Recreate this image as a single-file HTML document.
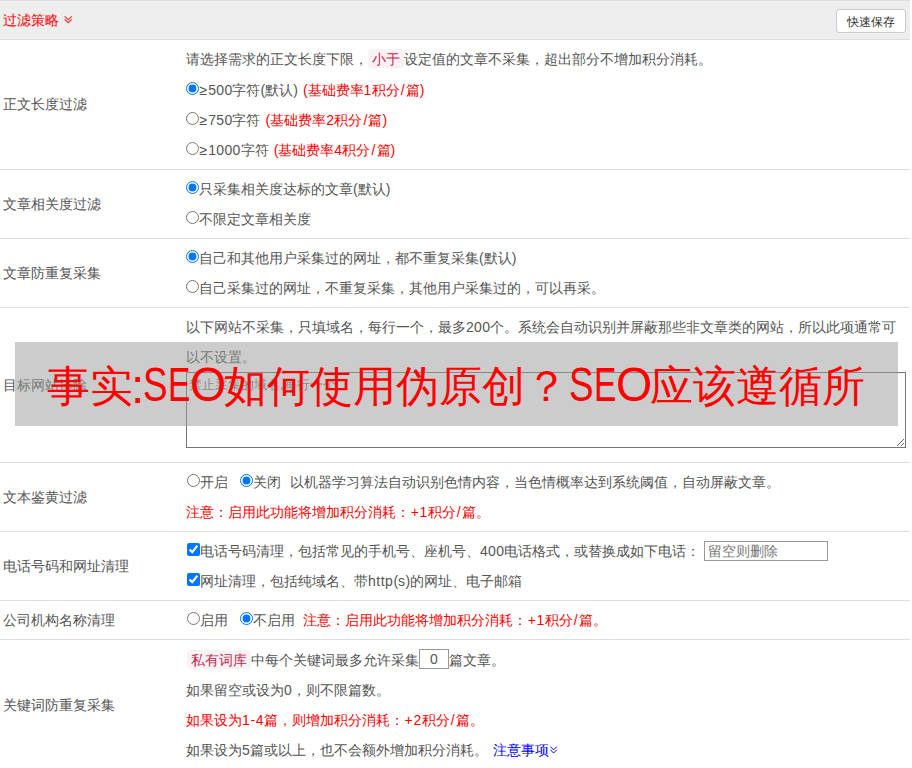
<!DOCTYPE html>
<html><head><meta charset="utf-8">
<style>
html,body{margin:0;padding:0;background:#fff;}
body{width:912px;height:768px;overflow:hidden;position:relative;font-family:"Liberation Sans",sans-serif;font-size:14px;color:#555;}
i{font-style:normal;}
.hd{position:absolute;left:0;top:0;width:910px;height:38px;background:#eee;border-top:1px solid #ddd;border-bottom:1px solid #ddd;}
.hd .t{position:absolute;left:3px;top:0;line-height:38px;color:#f00;}
.hd .chev{position:absolute;left:64px;top:14px;}
.btn{position:absolute;left:836px;top:8px;width:68px;height:22px;border:1px solid #ccc;border-radius:3px;background:#fff;font-size:12px;color:#333;text-align:center;line-height:24px;}
.row{position:absolute;left:0;width:910px;border-bottom:1px solid #ddd;}
.lab{position:absolute;left:3px;top:0;}
.ln{position:absolute;left:186px;height:30px;line-height:30px;white-space:nowrap;}
.ln.cx{left:187px;}
.red{color:#f00;}
.blue{color:#00f;}
.code{color:#c7254e;background:#f9f2f4;border-radius:4px;padding:2px 4px 1px;}
.gap{display:inline-block;width:12px;}
.gap2{display:inline-block;width:9px;}
.gap3{display:inline-block;width:8px;}
input[type=radio],input[type=checkbox]{margin:0;width:13px;height:13px;vertical-align:0;}
.ta{position:absolute;left:186px;top:64px;width:720px;height:76px;box-sizing:border-box;margin:0;padding:3px 2px 2px;border:1px solid #767676;border-radius:0;background:#fff;font-family:"Liberation Sans",sans-serif;font-size:13px;line-height:17px;}
.ta::placeholder{color:#757575;}
.inp{display:inline-block;vertical-align:top;margin-top:4px;box-sizing:border-box;width:30px;height:20px;border:1px solid #999;line-height:18px;text-align:center;}
.pin{position:absolute;left:704px;top:9px;width:124px;height:20px;box-sizing:border-box;border:1px solid #999;background:#fff;}
.pin span{position:absolute;left:3px;top:0;line-height:18px;color:#777;}
.lchev{vertical-align:1px;margin-left:0.6px;}
.ov{position:absolute;left:15px;top:342px;width:883px;height:84px;background:rgba(153,153,153,0.5);}
.ot{position:absolute;line-height:84px;height:84px;font-size:43px;color:#f00;white-space:nowrap;}
.ot.seo{font-size:48px;top:343px;transform-origin:0 0;}

</style></head><body>
<div class="hd"><span class="t">过滤策略</span><svg class="chev" width="9" height="9" viewBox="0 0 9 9"><path d="M0.6 1.3 L4.2 4.6 L7.8 1.3 M0.6 4.4 L4.2 7.7 L7.8 4.4" stroke="#f22" stroke-width="1.1" fill="none"/></svg><div class="btn">快速保存</div></div>
<div class="row" style="top:40px;height:129px">
<div class="lab" style="line-height:129px">正文长度过滤</div>
<div class="ln " style="top:4px">请选择需求的正文长度下限，<span class="code">小于</span>设定值的文章不采集，超出部分不增加积分消耗。</div>
<div class="ln " style="top:35px"><input type="radio" checked><i style="margin-left:0.5px;letter-spacing:1px">≥</i><i style="letter-spacing:0.3px">5</i><i style="letter-spacing:0.3px">0</i><i style="letter-spacing:0.3px">0</i>字符(默认)<i style="letter-spacing:1.2px"> </i><span class="red">(基础费率<i style="letter-spacing:0.3px">1</i>积分<i style="margin-left:1.1px;letter-spacing:1.1px">/</i>篇)</span></div>
<div class="ln " style="top:65px"><input type="radio"><i style="margin-left:0.5px;letter-spacing:1px">≥</i><i style="letter-spacing:0.3px">7</i><i style="letter-spacing:0.3px">5</i><i style="letter-spacing:0.3px">0</i>字符<i style="letter-spacing:1.2px"> </i><span class="red">(基础费率<i style="letter-spacing:0.3px">2</i>积分<i style="margin-left:1.1px;letter-spacing:1.1px">/</i>篇)</span></div>
<div class="ln " style="top:95px"><input type="radio"><i style="margin-left:0.5px;letter-spacing:1px">≥</i><i style="letter-spacing:0.3px">1</i><i style="letter-spacing:0.3px">0</i><i style="letter-spacing:0.3px">0</i><i style="letter-spacing:0.3px">0</i>字符<i style="letter-spacing:1.2px"> </i><span class="red">(基础费率<i style="letter-spacing:0.3px">4</i>积分<i style="margin-left:1.1px;letter-spacing:1.1px">/</i>篇)</span></div>
</div>
<div class="row" style="top:170px;height:68px">
<div class="lab" style="line-height:68px">文章相关度过滤</div>
<div class="ln " style="top:4px"><input type="radio" checked>只采集相关度达标的文章(默认)</div>
<div class="ln " style="top:34px"><input type="radio">不限定文章相关度</div>
</div>
<div class="row" style="top:239px;height:68px">
<div class="lab" style="line-height:68px">文章防重复采集</div>
<div class="ln " style="top:4px"><input type="radio" checked>自己和其他用户采集过的网址，都不重复采集(默认)</div>
<div class="ln " style="top:34px"><input type="radio">自己采集过的网址，不重复采集，其他用户采集过的，可以再采。</div>
</div>
<div class="row" style="top:308px;height:154px">
<div class="lab" style="line-height:154px">目标网站排除</div>
<div class="ln " style="top:4px">以下网站不采集，只填域名，每行一个，最多<i style="letter-spacing:0.3px">2</i><i style="letter-spacing:0.3px">0</i><i style="letter-spacing:0.3px">0</i>个。系统会自动识别并屏蔽那些非文章类的网站，所以此项通常可</div>
<div class="ln " style="top:34px">以不设置。</div>
<textarea class="ta" placeholder="禁止采集的域名,每行一个"></textarea>
</div>
<div class="row" style="top:463px;height:68px">
<div class="lab" style="line-height:68px">文本鉴黄过滤</div>
<div class="ln cx" style="top:4px"><input type="radio">开启<span class="gap"></span><input type="radio" checked>关闭<span class="gap2"></span>以机器学习算法自动识别色情内容，当色情概率达到系统阈值，自动屏蔽文章。</div>
<div class="ln " style="top:34px"><span class="red">注意：启用此功能将增加积分消耗：<i style="margin-left:0.7px;letter-spacing:0.7px">+</i><i style="letter-spacing:0.3px">1</i>积分<i style="margin-left:1.1px;letter-spacing:1.1px">/</i>篇。</span></div>
</div>
<div class="row" style="top:532px;height:68px">
<div class="lab" style="line-height:68px">电话号码和网址清理</div>
<div class="ln cx" style="top:4px"><input type="checkbox" checked>电话号码清理，包括常见的手机号、座机号、<i style="letter-spacing:0.3px">4</i><i style="letter-spacing:0.3px">0</i><i style="letter-spacing:0.3px">0</i>电话格式，或替换成如下电话：</div>
<div class="ln cx" style="top:34px"><input type="checkbox" checked>网址清理，包括纯域名、带<i style="letter-spacing:0.5px">h</i><i style="letter-spacing:0.5px">t</i><i style="letter-spacing:0.5px">t</i><i style="letter-spacing:0.5px">p</i>(<i style="letter-spacing:0.5px">s</i>)的网址、电子邮箱</div>
<div class="pin"><span>留空则删除</span></div>
</div>
<div class="row" style="top:601px;height:38px">
<div class="lab" style="line-height:38px">公司机构名称清理</div>
<div class="ln cx" style="top:4px"><input type="radio">启用<span class="gap"></span><input type="radio" checked>不启用<span class="gap3"></span><span class="red">注意：启用此功能将增加积分消耗：<i style="margin-left:0.7px;letter-spacing:0.7px">+</i><i style="letter-spacing:0.3px">1</i>积分<i style="margin-left:1.1px;letter-spacing:1.1px">/</i>篇。</span></div>
</div>
<div class="row" style="top:640px;height:130px;border-bottom:none">
<div class="lab" style="line-height:130px">关键词防重复采集</div>
<div class="ln " style="top:5px"><span style="margin-left:1px"></span><span class="code">私有词库</span>中每个关键词最多允许采集<span class="inp">0</span>篇文章。</div>
<div class="ln " style="top:35px">如果留空或设为<i style="letter-spacing:0.3px">0</i>，则不限篇数。</div>
<div class="ln " style="top:65px"><span class="red">如果设为<i style="letter-spacing:0.3px">1</i><i style="margin-left:0.5px;letter-spacing:0.5px">-</i><i style="letter-spacing:0.3px">4</i>篇，则增加积分消耗：<i style="margin-left:0.7px;letter-spacing:0.7px">+</i><i style="letter-spacing:0.3px">2</i>积分<i style="margin-left:1.1px;letter-spacing:1.1px">/</i>篇。</span></div>
<div class="ln " style="top:95px">如果设为<i style="letter-spacing:0.3px">5</i>篇或以上，也不会额外增加积分消耗。<i style="letter-spacing:1.2px"> </i><span class="blue">注意事项</span><svg class="lchev" width="8" height="8" viewBox="0 0 8 8"><path d="M0.4 0.6 L3.6 3.8 L6.8 0.6 M0.4 3.8 L3.6 7 L6.8 3.8" stroke="#00f" stroke-width="1" fill="none"/></svg></div>
</div>
<div class="ov"></div>
<div class="ot" style="left:47px;top:344px">事实</div>
<div class="ot" style="left:131px;top:345px;font-size:48px">:</div>
<div class="ot seo" style="left:143.05px;transform:scale(0.767,1.0)">S</div>
<div class="ot seo" style="left:168.25px;transform:scale(0.70,1.0)">E</div>
<div class="ot seo" style="left:189.95px;transform:scale(0.97,1.0)">O</div>
<div class="ot" style="left:224px;top:344px">如何使用伪原创？</div>
<div class="ot seo" style="left:569.05px;transform:scale(0.767,1.0)">S</div>
<div class="ot seo" style="left:594.25px;transform:scale(0.70,1.0)">E</div>
<div class="ot seo" style="left:615.95px;transform:scale(0.97,1.0)">O</div>
<div class="ot" style="left:650px;top:344px">应该遵循所</div>
</body></html>
